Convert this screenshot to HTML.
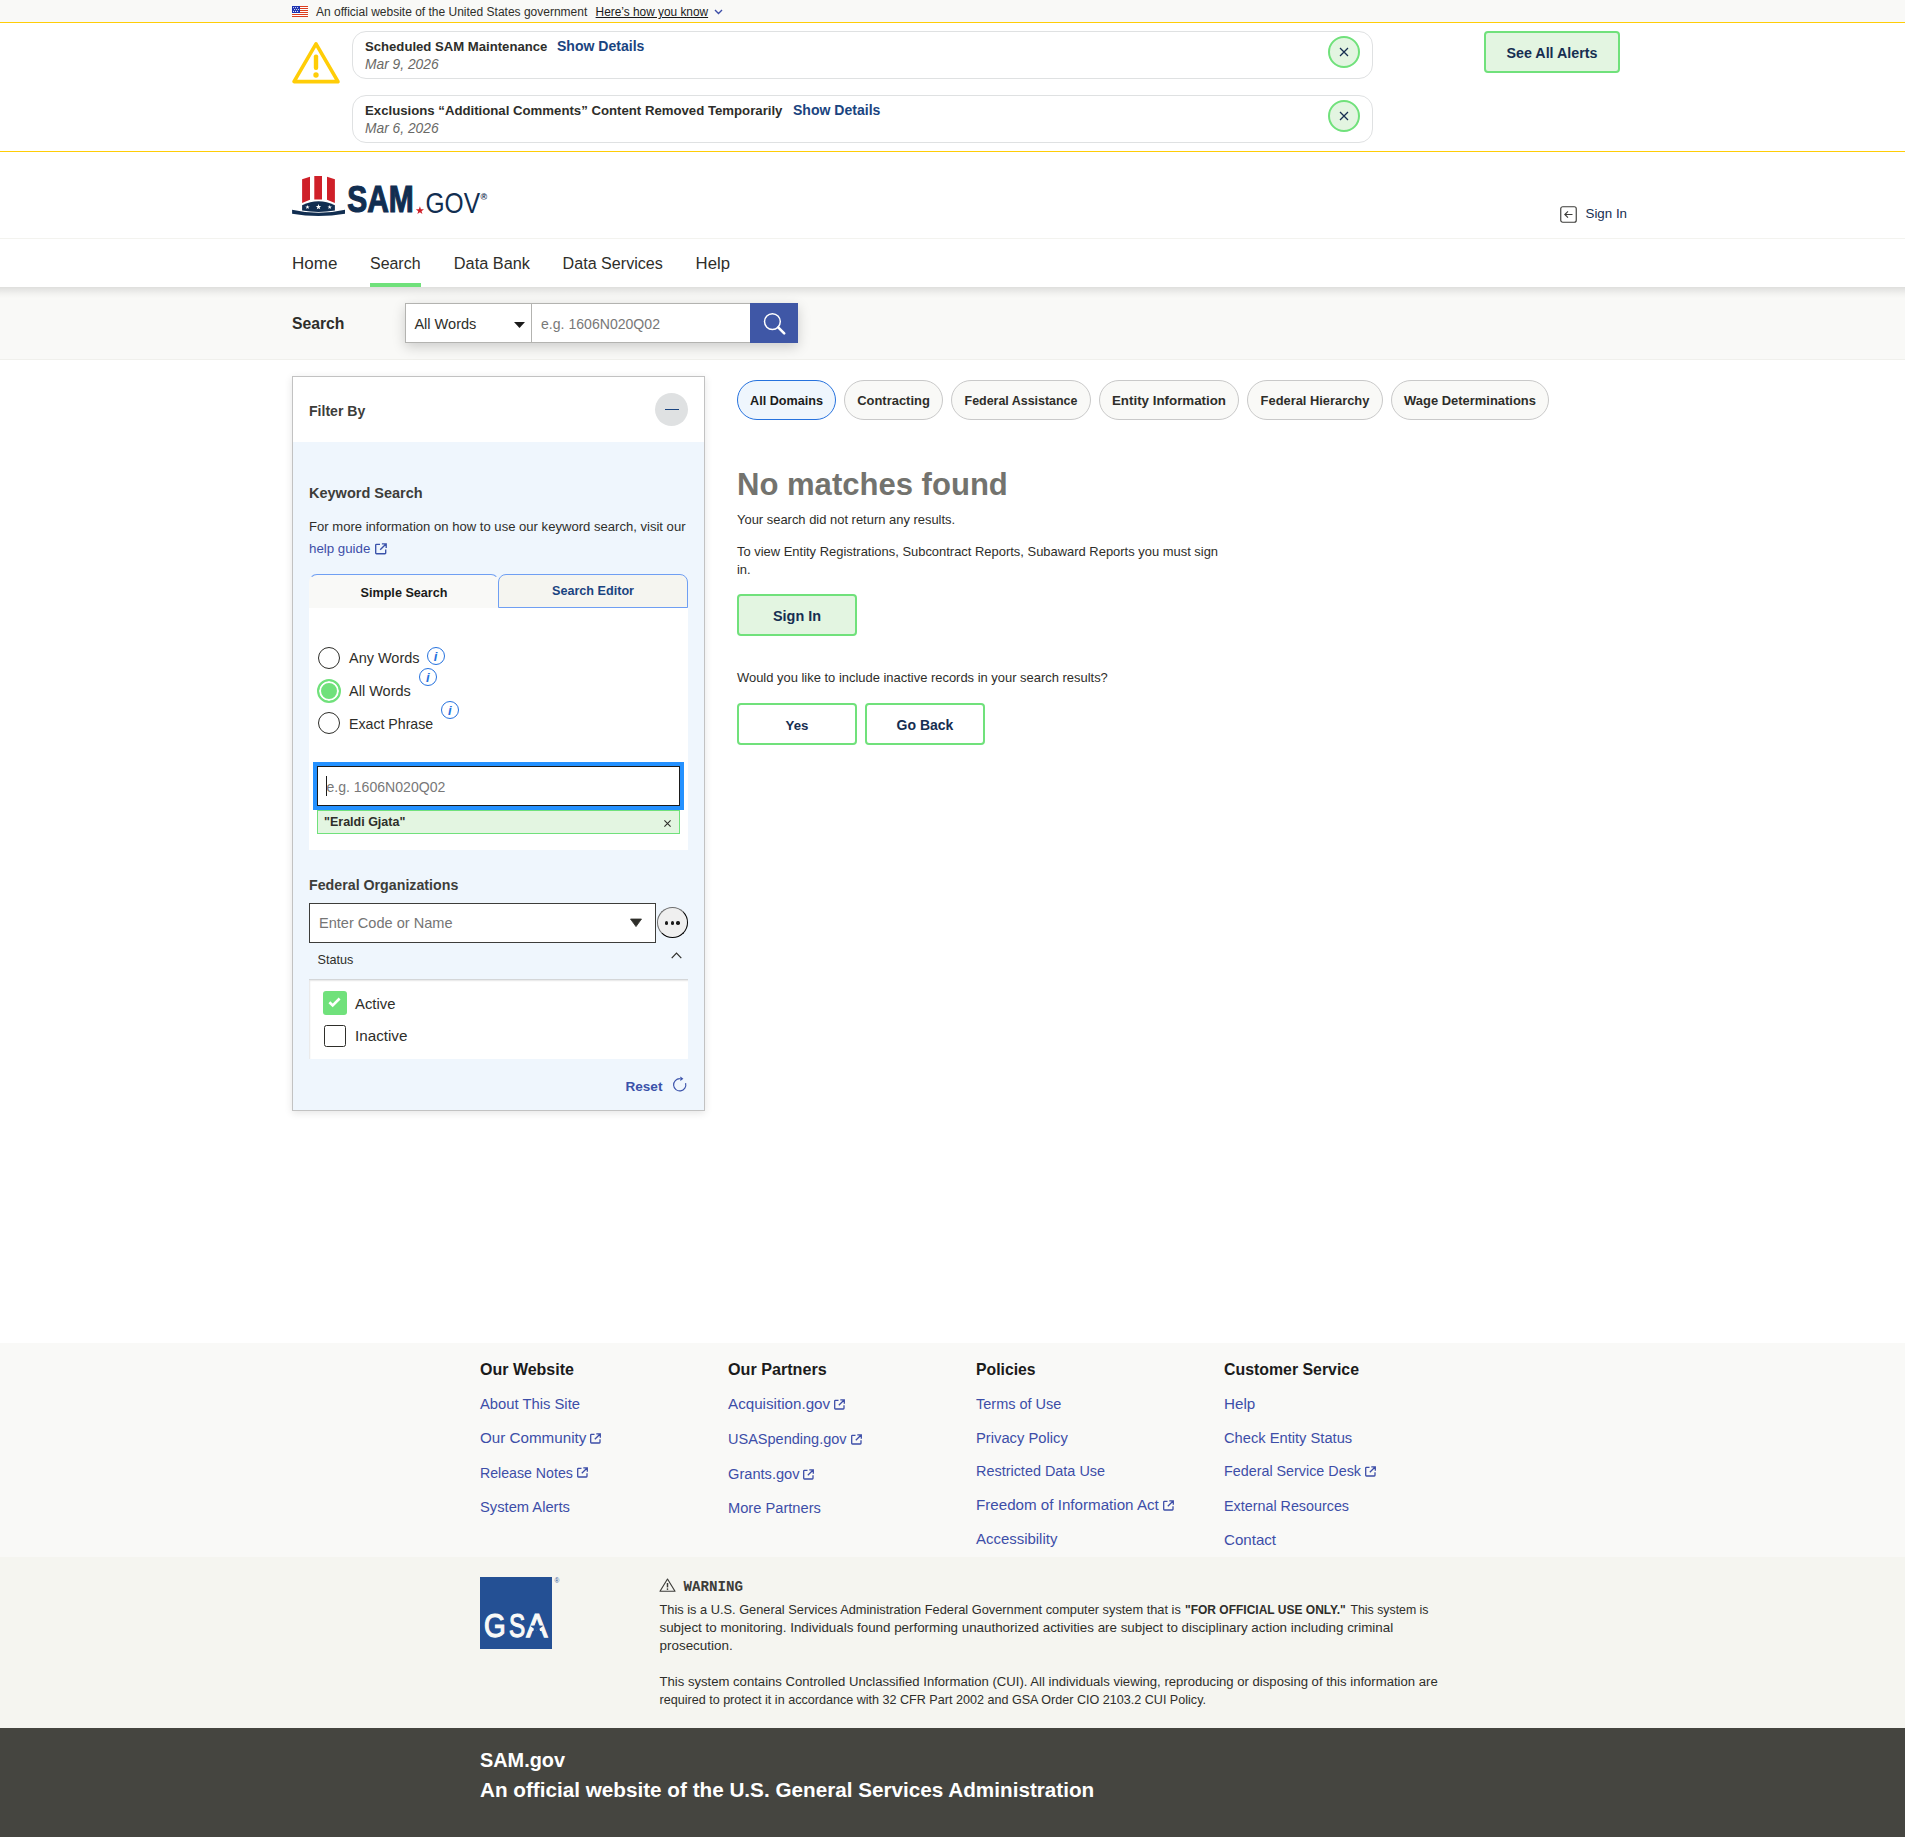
<!DOCTYPE html>
<html lang="en">
<head>
<meta charset="utf-8">
<title>SAM.gov | Search</title>
<style>
*{box-sizing:border-box;margin:0;padding:0}
html,body{width:1905px;height:1837px;overflow:hidden;background:#fff}
body{position:relative;font-family:"Liberation Sans",sans-serif;color:#1b1b1b;font-size:14px}
a{text-decoration:none;color:inherit}
.abs{position:absolute}
.t{position:absolute;white-space:nowrap;line-height:20px;height:20px}
.b{font-weight:700}
svg{display:block;position:absolute;overflow:visible}

/* ---------- gov banner ---------- */
#govbanner{position:absolute;left:0;top:0;width:1905px;height:22px;background:#f9f9f7}
#govbanner .t{font-size:12px;top:2px;color:#2e2e2a}
#yline1{position:absolute;left:0;top:22px;width:1905px;height:1px;background:#ffcd07}

/* ---------- alerts ---------- */
#alerts{position:absolute;left:0;top:23px;width:1905px;height:128px;background:#fff}
#yline2{position:absolute;left:0;top:151px;width:1905px;height:1px;background:#ffcd07}
.alertbox{position:absolute;left:352px;width:1021px;height:48px;border:1px solid #dfe1e2;border-radius:14px;background:#fff}
.alertbox .ttl{left:12px;top:5px;font-size:13.14px;font-weight:700;color:#2e2e2a}
.alertbox .lnk{top:4px;font-size:14.06px;font-weight:700;color:#1a4480}
.alertbox .dt{left:12px;top:23px;font-size:13.8px;font-style:italic;color:#696966}
.xbtn{position:absolute;left:975px;top:4px;width:32px;height:32px;border-radius:50%;border:2px solid #70e17b;background:#e3f5e1}
#seeall{position:absolute;left:1484px;top:31px;width:136px;height:42px;border:2px solid #70e17b;border-radius:4px;background:#e3f5e1;color:#162e51;font-weight:700;font-size:14.28px;text-align:center;line-height:40px}

/* ---------- header ---------- */
#header{position:absolute;left:0;top:152px;width:1905px;height:87px;background:#fff;border-bottom:1px solid #f3f3ef}
#signin{left:1585.5px;top:203.5px;font-size:13.33px;color:#162e51}

/* ---------- nav ---------- */
#nav{position:absolute;left:0;top:239px;width:1905px;height:48px;background:#fff;z-index:3}
#nav .t{top:15px;color:#2e2e2a}
#navline{position:absolute;left:370px;top:44px;width:50.5px;height:4px;background:#70e17b}

/* ---------- search strip ---------- */
#strip{position:absolute;left:0;top:287px;width:1905px;height:73px;background:#f9f9f7;border-bottom:1px solid #f0f0ec;z-index:2}
#strip .lbl{left:292px;top:27px;font-size:15.74px;font-weight:700;color:#2e2e2a}
#sbox{position:absolute;left:405px;top:16px;width:393px;height:40px;box-shadow:0 4px 12px rgba(0,0,0,.18)}
#ssel{position:absolute;left:0;top:0;width:127px;height:40px;background:#fff;border:1px solid #b3b3b0}
#sinp{position:absolute;left:126px;top:0;width:220px;height:40px;background:#fff;border:1px solid #b3b3b0;border-right:0}
#sbtn{position:absolute;left:345px;top:0;width:48px;height:40px;background:#3f57a6}

/* ---------- filter panel ---------- */
#panel{position:absolute;left:292px;top:376px;width:413px;height:735px;border:1px solid #c2c2c2;background:#eff6fd;box-shadow:0 2px 8px rgba(0,0,0,.11)}
#phead{position:absolute;left:0;top:0;width:411px;height:65px;background:#fff}
#phead .t{left:16px;top:24px;font-size:14.07px;font-weight:700;color:#3d3d3a}
#pminus{position:absolute;left:362px;top:16px;width:33px;height:33px;border-radius:50%;background:#dfe1e2}
#pminus i{position:absolute;left:9.5px;top:15.5px;width:14px;height:1.5px;background:#1a4480}
.ph{font-weight:700;color:#3d3d3a}
#tab1{position:absolute;left:16px;top:197px;width:190px;height:34px;background:#f9f9f7;border:1px solid transparent;border-top-color:#6f9ff3;border-bottom:0;border-radius:8px 8px 0 0;background-clip:border-box}
#tab2{position:absolute;left:205px;top:197px;width:190px;height:34px;background:#f5f5f0;border:1px solid #6f9ff3;border-radius:8px 8px 0 0}
#tab1 .t,#tab2 .t{left:0;width:100%;text-align:center;font-weight:700;font-size:12.62px}
#kbox{position:absolute;left:16px;top:231px;width:379px;height:242px;background:#fff}
.radio{position:absolute;left:9px;width:22px;height:22px;border-radius:50%;border:1.6px solid #2e2e2a;background:#fff}
.radio.on{left:8px;width:24px;height:24px;border:2px solid #70e17b;box-shadow:inset 0 0 0 2px #fff;background:#70e17b}
.rl{left:40px;color:#2e2e2a}
.info{position:absolute;width:18px;height:18px;border-radius:50%;border:1.6px solid #2672de;color:#2672de;font-style:italic;font-weight:700;font-size:13px;line-height:17px;text-align:center;text-indent:-.5px}
#kinp{position:absolute;left:8px;top:158px;width:363px;height:40px;border:1px solid #1b1b1b;outline:4px solid #2491ff;background:#fff}
#chip{position:absolute;left:8px;top:202px;width:363px;height:24px;background:#e3f5e1;border:1px solid #70e17b}
#finp{position:absolute;left:16px;top:526px;width:347px;height:40px;background:#fff;border:1.2px solid #3d3d3a}
#fdots{position:absolute;left:363.6px;top:529.8px;width:31.6px;height:31.6px;border-radius:50%;border:1.9px solid;border-color:#6e6e6e #000 #000 #6e6e6e;background:#efefef}
#fdots i{position:absolute;top:13.7px;width:3.4px;height:3.4px;border-radius:50%;background:#1b1b1b}
#stbox{position:absolute;left:16px;top:602px;width:379px;height:80px;background:#fff;border-top:1px solid #d4d6d8;box-shadow:inset 1px 1px 1.5px rgba(0,0,0,.1)}
#cb1{position:absolute;left:14px;top:11px;width:24px;height:24px;border-radius:3px;background:#70e17b}
#cb2{position:absolute;left:15px;top:45px;width:22px;height:22px;border-radius:2.5px;border:1.5px solid #2e2e2a;background:#fff}

/* ---------- results ---------- */
.pill{position:absolute;top:380px;height:40px;border-radius:20px;border:1px solid #c9c9c9;background:#f9f9f7;font-weight:700;font-size:12.8px;color:#2e2e2a;text-align:center;line-height:39px;padding-top:1px;white-space:nowrap}
.pill.on{background:#eff6fd;border-color:#2672de;color:#1b1b1b}
.gbtn{position:absolute;width:120px;height:42px;border:2px solid #70e17b;border-radius:4px;background:#fff;color:#162e51;font-weight:700;font-size:14px;text-align:center;line-height:40px}
.p13{font-size:12.94px;color:#2e2e2a}

/* ---------- footer ---------- */
#f1{position:absolute;left:0;top:1343px;width:1905px;height:214px;background:#f9f9f7}
#f2{position:absolute;left:0;top:1557px;width:1905px;height:171px;background:#f5f5f0}
#f3{position:absolute;left:0;top:1728px;width:1905px;height:109px;background:#454540}
.fh{font-weight:700;color:#1b1b1b}
.fl{color:#3d4ea8}
.wp{position:absolute;white-space:nowrap;line-height:18px;height:18px;color:#2e2e2a}
</style>
</head>
<body>

<!-- ================= GOV BANNER ================= -->
<div id="govbanner">
  <svg style="left:292px;top:6px" width="16" height="11" viewBox="0 0 16 11">
    <rect width="16" height="11" fill="#fff"/>
    <g fill="#db3e1f"><rect y="0" width="16" height="1"/><rect y="2" width="16" height="1"/><rect y="4" width="16" height="1"/><rect y="6" width="16" height="1"/><rect y="8" width="16" height="1"/><rect y="10" width="16" height="1"/></g>
    <rect width="8" height="7" fill="#1e33b1"/><g fill="#fff"><circle cx="1.6" cy="1.6" r=".55"/><circle cx="3.6" cy="1.6" r=".55"/><circle cx="5.6" cy="1.6" r=".55"/><circle cx="2.6" cy="3.5" r=".55"/><circle cx="4.6" cy="3.5" r=".55"/><circle cx="6.6" cy="3.5" r=".55"/><circle cx="1.6" cy="5.4" r=".55"/><circle cx="3.6" cy="5.4" r=".55"/><circle cx="5.6" cy="5.4" r=".55"/></g>
  </svg>
  <span class="t" style="left:316px">An official website of the United States government</span>
  <span class="t" style="left:595.6px;font-size:11.86px;text-decoration:underline;color:#1b1b1b">Here’s how you know</span>
  <svg style="left:714px;top:9px" width="9" height="6" viewBox="0 0 9 6"><path d="M1 1l3.5 3.5L8 1" fill="none" stroke="#3d4ea8" stroke-width="1.4"/></svg>
</div>
<div id="yline1"></div>

<!-- ================= ALERTS ================= -->
<div id="alerts">
  <svg style="left:292px;top:18px" width="48" height="43" viewBox="0 0 48 43">
    <path d="M24 2.8L46 40.6H2Z" fill="none" stroke="#ffcd07" stroke-width="3.6" stroke-linejoin="round"/>
    <rect x="21.8" y="13.4" width="4.4" height="15.6" rx="2" fill="#ffcd07"/>
    <circle cx="24" cy="34" r="2.7" fill="#ffcd07"/>
  </svg>
  <div class="alertbox" style="top:8px">
    <span class="t ttl">Scheduled SAM Maintenance</span>
    <a class="t lnk" style="left:204px">Show Details</a>
    <span class="t dt">Mar 9, 2026</span>
    <div class="xbtn"><svg style="left:9px;top:9px" width="10" height="10" viewBox="0 0 12 12"><path d="M1.2 1.2l9.6 9.6M10.8 1.2l-9.6 9.6" stroke="#162e51" stroke-width="1.5" fill="none"/></svg></div>
  </div>
  <div class="alertbox" style="top:72px">
    <span class="t ttl" style="font-size:13.2px">Exclusions “Additional Comments” Content Removed Temporarily</span>
    <a class="t lnk" style="left:440px">Show Details</a>
    <span class="t dt">Mar 6, 2026</span>
    <div class="xbtn"><svg style="left:9px;top:9px" width="10" height="10" viewBox="0 0 12 12"><path d="M1.2 1.2l9.6 9.6M10.8 1.2l-9.6 9.6" stroke="#162e51" stroke-width="1.5" fill="none"/></svg></div>
  </div>
</div>
<a id="seeall">See All Alerts</a>
<div id="yline2"></div>

<!-- ================= HEADER ================= -->
<div id="header"></div>
<svg style="left:288px;top:170px" width="210" height="52" viewBox="288 170 210 52">
  <g fill="#cf2029">
    <path d="M302.1 179.2L310 176.8V199.8L302.1 202.9Z"/>
    <path d="M314.3 176.1H322V199.6Q318.2 199.2 314.3 199.6Z"/>
    <path d="M327 176.8L334.9 179.2V202.9L327 199.8Z"/>
  </g>
  <path d="M302.1 205.3Q318.5 197.3 334.9 205.3V210.6Q318.5 213.2 302.1 210.6Z" fill="#112e51"/>
  <g fill="#fff"><polygon points="307.50,204.90 308.04,206.46 309.69,206.49 308.37,207.48 308.85,209.06 307.50,208.12 306.15,209.06 306.63,207.48 305.31,206.49 306.96,206.46"/><polygon points="318.50,204.10 319.18,206.06 321.26,206.10 319.60,207.36 320.20,209.35 318.50,208.16 316.80,209.35 317.40,207.36 315.74,206.10 317.82,206.06"/><polygon points="329.70,204.90 330.24,206.46 331.89,206.49 330.57,207.48 331.05,209.06 329.70,208.12 328.35,209.06 328.83,207.48 327.51,206.49 329.16,206.46"/></g>
  <path d="M292.1 209.7Q318.5 215.9 345 209.7V213.8Q318.5 218.4 292.1 213.8Z" fill="#112e51"/>
  <text x="347.2" y="212.2" font-family="Liberation Sans, sans-serif" font-weight="700" font-size="36.9" fill="#112e51" stroke="#112e51" stroke-width="1.2" textLength="66.5" lengthAdjust="spacingAndGlyphs">SAM</text>
  <polygon points="419.90,206.30 420.91,209.21 423.99,209.27 421.54,211.13 422.43,214.08 419.90,212.32 417.37,214.08 418.26,211.13 415.81,209.27 418.89,209.21" fill="#cf2029"/>
  <text x="425.5" y="212.6" font-family="Liberation Sans, sans-serif" font-weight="400" font-size="29.6" fill="#112e51" textLength="54.5" lengthAdjust="spacingAndGlyphs">GOV</text>
  <text x="480.6" y="200.3" font-family="Liberation Sans, sans-serif" font-weight="700" font-size="9" fill="#112e51">®</text>
</svg>
<svg style="left:1560px;top:206px" width="17" height="17" viewBox="0 0 17 17">
  <rect x=".75" y=".75" width="15.5" height="15.5" rx="2" fill="none" stroke="#3d3d3a" stroke-width="1.15"/>
  <path d="M12.5 8.5H5M8 5.3L4.8 8.5 8 11.7" fill="none" stroke="#3d3d3a" stroke-width="1.1"/>
</svg>
<a id="signin" class="t">Sign In</a>

<!-- ================= NAV ================= -->
<div id="nav">
  <a class="t" style="left:292px;top:15.01px;font-size:17.02px">Home</a>
  <a class="t" style="left:370px;top:15.01px;font-size:15.94px">Search</a>
  <a class="t" style="left:453.8px;top:14.01px;font-size:16.32px">Data Bank</a>
  <a class="t" style="left:562.6px;top:14.01px;font-size:16.13px">Data Services</a>
  <a class="t" style="left:695.6px;top:15.00px;font-size:16.73px">Help</a>
  <div id="navline"></div>
</div>

<!-- ================= SEARCH STRIP ================= -->
<div id="strip"><div style="position:absolute;left:0;top:0;width:1905px;height:11px;background:linear-gradient(rgba(0,0,0,.105),rgba(0,0,0,.03) 60%,rgba(0,0,0,0))"></div>
  <span class="t lbl">Search</span>
  <div id="sbox">
    <div id="ssel"><span class="t" style="left:8.4px;top:10px;font-size:14.55px;color:#2e2e2a">All Words</span>
      <svg style="left:108px;top:18px" width="11" height="6" viewBox="0 0 11 6"><path d="M0 0h11L5.5 6z" fill="#1b1b1b"/></svg></div>
    <div id="sinp"><span class="t" style="left:9px;top:10px;font-size:14.08px;color:#787878">e.g. 1606N020Q02</span></div>
    <div id="sbtn"><svg style="left:12px;top:8px" width="24" height="24" viewBox="0 0 24 24">
      <circle cx="10.4" cy="10.6" r="7.9" fill="none" stroke="#fff" stroke-width="1.5"/>
      <path d="M16.2 16.4l6 6" stroke="#fff" stroke-width="2.6" stroke-linecap="round"/></svg></div>
  </div>
</div>

<!-- ================= FILTER PANEL ================= -->
<div id="panel">
  <div id="phead"><span class="t">Filter By</span><div id="pminus"><i></i></div></div>
  <span class="t ph" style="left:16px;top:106px;font-size:14.51px">Keyword Search</span>
  <span class="t" style="left:16px;top:140px;font-size:13.09px;color:#2e2e2a">For more information on how to use our keyword search, visit our</span>
  <a class="t" style="left:16px;top:162px;font-size:13.3px;color:#3d4ea8">help guide</a>
  <svg style="left:82px;top:166.3px" width="12" height="11.5" viewBox="0 0 12 11.5"><path d="M5 1.3H1.5a.8.8 0 0 0-.8.8v7.8a.8.8 0 0 0 .8.8h8.4a.8.8 0 0 0 .8-.8V6.6M6.9.8h4.3v4.3M11 1L5.2 6.8" fill="none" stroke="#3a52aa" stroke-width="1.35"/></svg>
  <div id="tab1"><span class="t" style="top:7.5px;color:#1b1b1b">Simple Search</span></div>
  <div id="tab2"><span class="t" style="top:6px;color:#1a4480">Search Editor</span></div>
  <div id="kbox">
    <div class="radio" style="top:39px"></div><span class="t rl" style="top:40px;font-size:14.47px">Any Words</span>
    <div class="info" style="left:117.7px;top:39.3px">i</div>
    <div class="radio on" style="top:71px"></div><span class="t rl" style="top:73px;font-size:14.5px">All Words</span>
    <div class="info" style="left:110px;top:60px">i</div>
    <div class="radio" style="top:103.5px"></div><span class="t rl" style="top:106px;font-size:14.17px">Exact Phrase</span>
    <div class="info" style="left:132px;top:93px">i</div>
    <div id="kinp"><i style="position:absolute;left:7.6px;top:9px;width:1px;height:20px;background:#1b1b1b"></i><span class="t" style="left:8.4px;top:9.5px;font-size:14.08px;color:#787878">e.g. 1606N020Q02</span></div>
    <div id="chip"><span class="t" style="left:6px;top:1px;font-size:12.5px;font-weight:700;color:#2e2e2a">"Eraldi Gjata"</span>
      <svg style="left:346px;top:8.5px" width="7" height="7" viewBox="0 0 7 7"><path d="M.4.4l6.2 6.2M6.6.4L.4 6.6" stroke="#2e2e2a" stroke-width="1.1" fill="none"/></svg></div>
  </div>
  <span class="t ph" style="left:16px;top:498px;font-size:14.23px">Federal Organizations</span>
  <div id="finp"><span class="t" style="left:9px;top:9px;font-size:14.57px;color:#757575">Enter Code or Name</span>
    <svg style="left:319.6px;top:14.6px" width="12" height="8" viewBox="0 0 12 8"><path d="M.5 0h11L6 7.6z" fill="#2e2e2a" stroke="#2e2e2a" stroke-width=".8" stroke-linejoin="round"/></svg></div>
  <div id="fdots"><i style="left:7.1px"></i><i style="left:13px"></i><i style="left:18.9px"></i></div>
  <span class="t" style="left:24.5px;top:573px;font-size:12.63px;color:#2e2e2a">Status</span>
  <svg style="left:377.8px;top:574.8px" width="11" height="7" viewBox="0 0 11 7"><path d="M.7 6.2L5.5 1.2l4.8 5" fill="none" stroke="#2e2e2a" stroke-width="1.2"/></svg>
  <div id="stbox">
    <div id="cb1"><svg style="left:5.3px;top:5.8px" width="13" height="10" viewBox="0 0 13 10"><path d="M1.4 5.2l3.3 3.2L11.6 1.5" fill="none" stroke="#fff" stroke-width="2.6"/></svg></div>
    <span class="t" style="left:46px;top:14px;font-size:14.85px;color:#2e2e2a">Active</span>
    <div id="cb2"></div>
    <span class="t" style="left:46px;top:46px;font-size:15.23px;color:#2e2e2a">Inactive</span>
  </div>
  <a class="t b" style="left:332.5px;top:700px;font-size:13.55px;color:#3a52aa">Reset</a>
  <svg style="left:379px;top:699px" width="16" height="17" viewBox="0 0 16 17"><path d="M7.9 2.7A6.1 6.1 0 1 0 13.6 7.2" fill="none" stroke="#3a52aa" stroke-width="1.15"/><path d="M8.3 .4l3.1 2.3-3.1 2.2z" fill="#3a52aa"/></svg>
</div>

<!-- ================= RESULTS ================= -->
<a class="pill on" style="left:737px;width:99px;font-size:12.62px">All Domains</a>
<a class="pill" style="left:844px;width:99px;font-size:12.96px;line-height:37px">Contracting</a>
<a class="pill" style="left:951px;width:140px;font-size:12.45px">Federal Assistance</a>
<a class="pill" style="left:1099px;width:140px;font-size:13.33px;line-height:37px">Entity Information</a>
<a class="pill" style="left:1247px;width:136px;font-size:12.89px;line-height:37px">Federal Hierarchy</a>
<a class="pill" style="left:1391px;width:158px;font-size:12.94px;line-height:37px">Wage Determinations</a>

<h1 class="t b" style="left:737px;top:465px;height:40px;line-height:40px;font-size:31.05px;color:#73736e">No matches found</h1>
<p class="t p13" style="left:737px;top:510px">Your search did not return any results.</p>
<p class="t p13" style="left:737px;top:542px">To view Entity Registrations, Subcontract Reports, Subaward Reports you must sign</p>
<p class="t p13" style="left:737px;top:560px">in.</p>
<a class="gbtn" style="left:737px;top:594px;background:#e3f5e1;font-size:14.42px">Sign In</a>
<p class="t p13" style="left:737px;top:668px">Would you like to include inactive records in your search results?</p>
<a class="gbtn" style="left:737px;top:703px;font-size:13.25px;line-height:41px">Yes</a>
<a class="gbtn" style="left:865px;top:703px">Go Back</a>


<!-- ================= FOOTER ================= -->
<div id="f1"></div><div id="f2"></div><div id="f3"></div>
<span class="t fh" style="left:480px;top:1359.61px;font-size:16.01px">Our Website</span>
<a class="t fl" style="left:480px;top:1393.6px;font-size:14.79px">About This Site</a>
<a class="t fl" style="left:480px;top:1427.6px;font-size:15.2px">Our Community</a>
<svg style="left:590.2px;top:1432.6px" width="11" height="11" viewBox="0 0 11 11"><path d="M4.5 1.3H1.4a.7.7 0 0 0-.7.7v7.3a.7.7 0 0 0 .7.7h7.9a.7.7 0 0 0 .7-.7V6.2M6.3.8h4v4M10.1 1L4.8 6.3" fill="none" stroke="#3d4ea8" stroke-width="1.3"/></svg>
<a class="t fl" style="left:480px;top:1462.8px;font-size:14.17px">Release Notes</a>
<svg style="left:576.7px;top:1467.4px" width="11" height="11" viewBox="0 0 11 11"><path d="M4.5 1.3H1.4a.7.7 0 0 0-.7.7v7.3a.7.7 0 0 0 .7.7h7.9a.7.7 0 0 0 .7-.7V6.2M6.3.8h4v4M10.1 1L4.8 6.3" fill="none" stroke="#3d4ea8" stroke-width="1.3"/></svg>
<a class="t fl" style="left:480px;top:1497.3px;font-size:14.72px">System Alerts</a>
<span class="t fh" style="left:728px;top:1358.61px;font-size:16.15px">Our Partners</span>
<a class="t fl" style="left:728px;top:1393.9px;font-size:15.2px">Acquisition.gov</a>
<svg style="left:834.0px;top:1398.9px" width="11" height="11" viewBox="0 0 11 11"><path d="M4.5 1.3H1.4a.7.7 0 0 0-.7.7v7.3a.7.7 0 0 0 .7.7h7.9a.7.7 0 0 0 .7-.7V6.2M6.3.8h4v4M10.1 1L4.8 6.3" fill="none" stroke="#3d4ea8" stroke-width="1.3"/></svg>
<a class="t fl" style="left:728px;top:1429.0px;font-size:14.53px">USASpending.gov</a>
<svg style="left:850.6px;top:1433.7px" width="11" height="11" viewBox="0 0 11 11"><path d="M4.5 1.3H1.4a.7.7 0 0 0-.7.7v7.3a.7.7 0 0 0 .7.7h7.9a.7.7 0 0 0 .7-.7V6.2M6.3.8h4v4M10.1 1L4.8 6.3" fill="none" stroke="#3d4ea8" stroke-width="1.3"/></svg>
<a class="t fl" style="left:728px;top:1463.7px;font-size:14.63px">Grants.gov</a>
<svg style="left:803.3px;top:1468.5px" width="11" height="11" viewBox="0 0 11 11"><path d="M4.5 1.3H1.4a.7.7 0 0 0-.7.7v7.3a.7.7 0 0 0 .7.7h7.9a.7.7 0 0 0 .7-.7V6.2M6.3.8h4v4M10.1 1L4.8 6.3" fill="none" stroke="#3d4ea8" stroke-width="1.3"/></svg>
<a class="t fl" style="left:728px;top:1498.4px;font-size:14.66px">More Partners</a>
<span class="t fh" style="left:976px;top:1359.61px;font-size:15.76px">Policies</span>
<a class="t fl" style="left:976px;top:1394.2px;font-size:14.5px">Terms of Use</a>
<a class="t fl" style="left:976px;top:1428.1px;font-size:14.76px">Privacy Policy</a>
<a class="t fl" style="left:976px;top:1460.5px;font-size:14.43px">Restricted Data Use</a>
<a class="t fl" style="left:976px;top:1494.7px;font-size:15.17px">Freedom of Information Act</a>
<svg style="left:1162.8px;top:1499.7px" width="11" height="11" viewBox="0 0 11 11"><path d="M4.5 1.3H1.4a.7.7 0 0 0-.7.7v7.3a.7.7 0 0 0 .7.7h7.9a.7.7 0 0 0 .7-.7V6.2M6.3.8h4v4M10.1 1L4.8 6.3" fill="none" stroke="#3d4ea8" stroke-width="1.3"/></svg>
<a class="t fl" style="left:976px;top:1529.3px;font-size:14.94px">Accessibility</a>
<span class="t fh" style="left:1224px;top:1359.61px;font-size:15.88px">Customer Service</span>
<a class="t fl" style="left:1224px;top:1393.9px;font-size:15.19px">Help</a>
<a class="t fl" style="left:1224px;top:1428.1px;font-size:14.7px">Check Entity Status</a>
<a class="t fl" style="left:1224px;top:1461.0px;font-size:14.33px">Federal Service Desk</a>
<svg style="left:1364.8px;top:1465.7px" width="11" height="11" viewBox="0 0 11 11"><path d="M4.5 1.3H1.4a.7.7 0 0 0-.7.7v7.3a.7.7 0 0 0 .7.7h7.9a.7.7 0 0 0 .7-.7V6.2M6.3.8h4v4M10.1 1L4.8 6.3" fill="none" stroke="#3d4ea8" stroke-width="1.3"/></svg>
<a class="t fl" style="left:1224px;top:1495.7px;font-size:14.33px">External Resources</a>
<a class="t fl" style="left:1224px;top:1529.6px;font-size:15.12px">Contact</a>
<svg style="left:480px;top:1577px" width="84" height="72" viewBox="0 0 84 72">
  <rect width="72" height="72" fill="#245094"/>
  <g font-family="Liberation Sans, sans-serif" font-size="34" fill="#f9f9f7" stroke="#f9f9f7" stroke-width="1.25">
  <text x="4.1" y="60.1" textLength="21.7" lengthAdjust="spacingAndGlyphs">G</text>
  <text x="29.1" y="60.1" textLength="16.2" lengthAdjust="spacingAndGlyphs">S</text>
  <text x="46.3" y="60.1" textLength="21.2" lengthAdjust="spacingAndGlyphs">A</text></g>
  <polygon points="56.70,44.00 58.40,48.55 63.26,48.77 59.46,51.80 60.76,56.48 56.70,53.80 52.64,56.48 53.94,51.80 50.14,48.77 55.00,48.55" fill="#245094"/>
  <text x="74.6" y="6.2" font-family="Liberation Sans, sans-serif" font-size="6.5" fill="#245094">®</text>
</svg>
<svg style="left:659px;top:1578px" width="17" height="14" viewBox="0 0 17 14"><path d="M8.5 1L16 13.2H1Z" fill="none" stroke="#3d3d3a" stroke-width="1.15" stroke-linejoin="round"/><path d="M8.5 5v4.4" stroke="#3d3d3a" stroke-width="1.5"/><circle cx="8.5" cy="11.1" r=".85" fill="#3d3d3a"/></svg>
<span class="t" style="left:683.4px;top:1577px;font-family:'Liberation Mono',monospace;font-weight:700;font-size:14.2px;color:#3d3d3a">WARNING</span>
<span class="wp" style="left:659.5px;top:1601px;font-size:12.81px;font-weight:400">This is a U.S. General Services Administration Federal Government computer system that is</span>
<b class="wp" style="left:1185.0px;top:1601px;font-size:12.0px;font-weight:700">"FOR OFFICIAL USE ONLY."</b>
<span class="wp" style="left:1350.5px;top:1601px;font-size:12.32px;font-weight:400">This system is</span>
<span class="wp" style="left:659.5px;top:1619px;font-size:13.37px;font-weight:400">subject to monitoring. Individuals found performing unauthorized activities are subject to disciplinary action including criminal</span>
<span class="wp" style="left:659.5px;top:1637px;font-size:13.44px;font-weight:400">prosecution.</span>
<span class="wp" style="left:659.5px;top:1673px;font-size:13.12px;font-weight:400">This system contains Controlled Unclassified Information (CUI). All individuals viewing, reproducing or disposing of this information are</span>
<span class="wp" style="left:659.5px;top:1691px;font-size:12.58px;font-weight:400">required to protect it in accordance with 32 CFR Part 2002 and GSA Order CIO 2103.2 CUI Policy.</span>
<span class="t b" style="left:480px;top:1744.6px;height:30px;line-height:30px;font-size:19.87px;color:#fff">SAM.gov</span>
<span class="t b" style="left:480px;top:1775.3px;height:30px;line-height:30px;font-size:20.7px;color:#fff">An official website of the U.S. General Services Administration</span>


</body>
</html>
